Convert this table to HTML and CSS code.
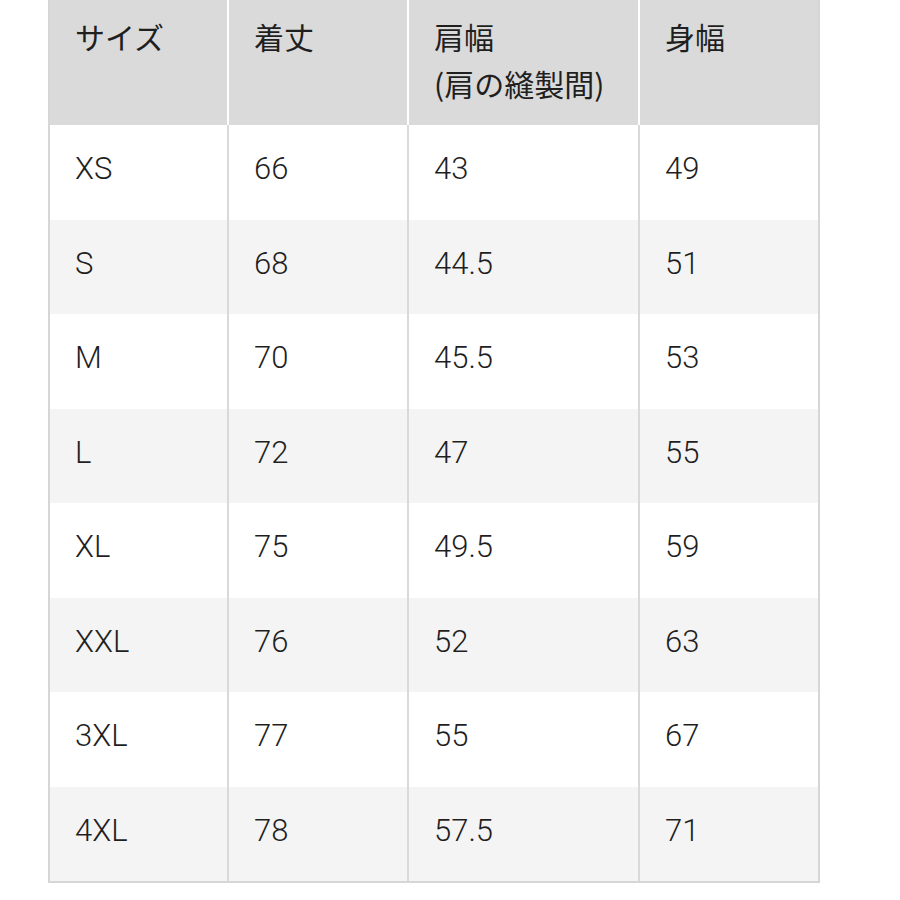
FILE: index.html
```html
<!DOCTYPE html>
<html lang="ja">
<head>
<meta charset="utf-8">
<title>サイズ表</title>
<link rel="stylesheet" href="styles.css">
</head>
<body>
<div class="size-table">
  <div class="row head">
    <div class="cell">サイズ</div>
    <div class="cell">着丈</div>
    <div class="cell">肩幅<br>(肩の縫製間)</div>
    <div class="cell">身幅</div>
  </div>
  <div class="row">
    <div class="cell">XS</div><div class="cell">66</div><div class="cell">43</div><div class="cell">49</div>
  </div>
  <div class="row alt">
    <div class="cell">S</div><div class="cell">68</div><div class="cell">44.5</div><div class="cell">51</div>
  </div>
  <div class="row">
    <div class="cell">M</div><div class="cell">70</div><div class="cell">45.5</div><div class="cell">53</div>
  </div>
  <div class="row alt">
    <div class="cell">L</div><div class="cell">72</div><div class="cell">47</div><div class="cell">55</div>
  </div>
  <div class="row">
    <div class="cell">XL</div><div class="cell">75</div><div class="cell">49.5</div><div class="cell">59</div>
  </div>
  <div class="row alt">
    <div class="cell">XXL</div><div class="cell">76</div><div class="cell">52</div><div class="cell">63</div>
  </div>
  <div class="row">
    <div class="cell">3XL</div><div class="cell">77</div><div class="cell">55</div><div class="cell">67</div>
  </div>
  <div class="row alt">
    <div class="cell">4XL</div><div class="cell">78</div><div class="cell">57.5</div><div class="cell">71</div>
  </div>
</div>
</body>
</html>
```
FILE: styles.css
```css
html, body {
  margin: 0;
  padding: 0;
  background: #ffffff;
}

.size-table {
  box-sizing: border-box;
  margin-left: 48px;
  width: 772px;
  border: 2px solid #d6d6d6;
  border-top: none;
  color: #1f1f1f;
  font-family: Roboto, "Liberation Sans", "Noto Sans CJK JP", sans-serif;
  font-weight: 300;
}

.row {
  display: grid;
  grid-template-columns: 179px 180px 231px 178px;
  height: 94.5px;
  background: #ffffff;
}

.row.alt {
  background: #f4f4f4;
}

.cell {
  box-sizing: border-box;
  padding: 24px 0 0 25px;
  font-size: 31px;
  line-height: 40px;
  border-right: 2px solid #d9d9d9;
}

.cell:last-child {
  border-right: none;
}

.row.head {
  height: 125px;
  background: #dadada;
}

.row.head .cell {
  font-family: "Noto Sans CJK JP", "Liberation Sans", sans-serif;
  font-weight: 400;
  font-size: 30px;
  line-height: 47px;
  padding-top: 13px;
  border-right-color: #ffffff;
}
```
